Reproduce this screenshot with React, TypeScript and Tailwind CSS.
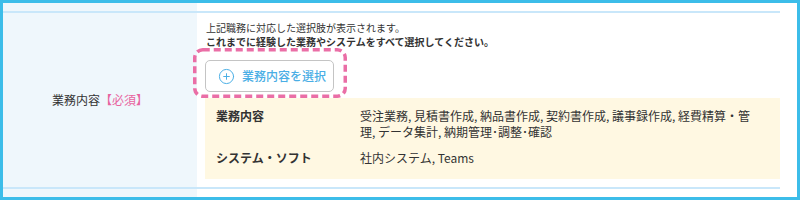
import { CirclePlus } from 'lucide-react';

const font = { fontFamily: '"Noto Sans CJK JP", "Noto Sans", sans-serif' };

const rows = [
  {
    label: '業務内容',
    value:
      '受注業務, 見積書作成, 納品書作成, 契約書作成, 議事録作成, 経費精算・管理, データ集計, 納期管理･調整･確認',
  },
  { label: 'システム・ソフト', value: '社内システム, Teams' },
];

const App = () => {
  return (
    <div
      className="w-[800px] h-[200px] border-[3px] border-[#3cbde9] bg-[linear-gradient(to_right,#eff7fc_194px,#ffffff_194px)] pt-2 pr-[17px] text-[#333]"
      style={font}
    >
      <div className="flex h-[178px] border-y-2 border-[#c9e7fa]">
        {/* 見出しセル */}
        <div className="w-[194px] flex items-center justify-center text-[12px]">
          業務内容<span className="text-[#e8649f]">【必須】</span>
        </div>

        {/* 入力セル */}
        <div className="flex-1 pt-2 pl-2">
          <p className="pl-px text-[10px] leading-[14px]">上記職務に対応した選択肢が表示されます。</p>
          <p className="pl-px text-[10px] leading-[14px] font-bold">
            これまでに経験した業務やシステムをすべて選択してください。
          </p>

          <div className="relative mt-[11px] w-[129px]">
            <svg className="absolute -left-3 -top-3 overflow-visible" width="154" height="50">
              <rect
                x="1.75"
                y="1.75"
                width="150.5"
                height="46.5"
                rx="8"
                fill="none"
                stroke="#ea6ea6"
                strokeWidth="3.5"
                strokeDasharray="7 4"
              />
            </svg>
            <button className="relative flex items-center h-8 w-[129px] rounded-[5px] border border-[#c4c4c4] bg-white pl-[12px] text-[12px] font-medium text-[#4aaee5]">
              <CirclePlus size={17} strokeWidth={1.4} className="mr-[7px]" />
              業務内容を選択
            </button>
          </div>

          <div className="mt-[6px] bg-[#fff8e2] pl-[11px] pt-[10px] pb-[13px] text-[12px] leading-4">
            {rows.map((row, i) => (
              <div key={row.label} className={`flex ${i > 0 ? 'mt-[10px]' : ''}`}>
                <div className="w-[144px] shrink-0 font-bold">{row.label}</div>
                <div className="w-[404px]">{row.value}</div>
              </div>
            ))}
          </div>
        </div>
      </div>
    </div>
  );
};

export default App;
